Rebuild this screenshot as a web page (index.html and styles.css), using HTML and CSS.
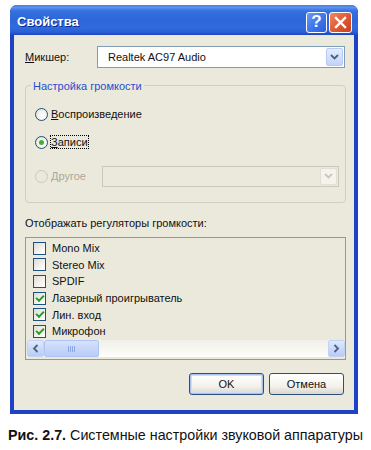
FILE: index.html
```html
<!DOCTYPE html>
<html lang="ru">
<head>
    <meta charset="UTF-8">
    <title>Свойства</title>
    <link rel="stylesheet" href="styles.css">
</head>
<body>
    <div class="window">
        <div class="titlebar">
            <span class="title">Свойства</span>
            <div class="caption-buttons">
                <span class="cap-btn help">?</span>
                <span class="cap-btn close">
                    <svg width="13" height="13" viewBox="0 0 13 13"><path d="M2 2 L11 11 M11 2 L2 11" stroke="#fff" stroke-width="2.4" stroke-linecap="square"/></svg>
                </span>
            </div>
        </div>

        <div class="client">
            <div class="mixer-row">
                <span class="label"><u>М</u>икшер:</span>
                <div class="combo">
                    <span class="combo-text">Realtek AC97 Audio</span>
                    <span class="drop-btn">
                        <svg width="9" height="6" viewBox="0 0 9 6"><path d="M1 1 L4.5 4.5 L8 1" fill="none" stroke="#4d6185" stroke-width="1.8"/></svg>
                    </span>
                </div>
            </div>

            <div class="group">
                <span class="legend">Настройка громкости</span>
                <div class="radio-row">
                    <span class="radio"></span>
                    <span class="label"><u>В</u>оспроизведение</span>
                </div>
                <div class="radio-row second">
                    <span class="radio checked"></span>
                    <span class="label focus"><u>З</u>аписи</span>
                </div>
                <div class="radio-row third disabled">
                    <span class="radio"></span>
                    <span class="label"><u>Д</u>ругое</span>
                    <div class="combo combo-disabled">
                        <span class="drop-btn">
                            <svg width="9" height="6" viewBox="0 0 9 6"><path d="M1 1 L4.5 4.5 L8 1" fill="none" stroke="#c9c7ba" stroke-width="1.8"/></svg>
                        </span>
                    </div>
                </div>
            </div>

            <div class="list-label">Отображать регуляторы громкости:</div>

            <div class="listbox">
                <div class="items">
                    <div class="item"><span class="check"></span>Mono Mix</div>
                    <div class="item"><span class="check"></span>Stereo Mix</div>
                    <div class="item"><span class="check"></span>SPDIF</div>
                    <div class="item"><span class="check checked"></span>Лазерный проигрыватель</div>
                    <div class="item"><span class="check checked"></span>Лин. вход</div>
                    <div class="item"><span class="check checked"></span>Микрофон</div>
                </div>
                <div class="hscroll">
                    <span class="arrow">
                        <svg width="7" height="9" viewBox="0 0 7 9"><path d="M5.5 1 L2 4.5 L5.5 8" fill="none" stroke="#4d6185" stroke-width="1.8"/></svg>
                    </span>
                    <span class="thumb"><span class="grip"></span></span>
                    <span class="track"></span>
                    <span class="arrow">
                        <svg width="7" height="9" viewBox="0 0 7 9"><path d="M1.5 1 L5 4.5 L1.5 8" fill="none" stroke="#4d6185" stroke-width="1.8"/></svg>
                    </span>
                </div>
            </div>

            <div class="buttons">
                <button class="btn default">OK</button>
                <button class="btn">Отмена</button>
            </div>
        </div>
    </div>

    <p class="figure"><b>Рис. 2.7.</b> Системные настройки звуковой аппаратуры</p>
</body>
</html>
```

FILE: styles.css
```css
* {
    margin: 0;
    padding: 0;
    box-sizing: border-box;
}

body {
    background: #fff;
    font-family: 'Liberation Sans', Arial, sans-serif;
    font-size: 11px;
    color: #111;
}

.window {
    margin: 5px 0 0 10px;
    width: 348px;
    height: 409px;
    background: #1d43c4;
    border-radius: 7px 7px 0 0;
    padding: 0 4px 4px 4px;
    display: flex;
    flex-direction: column;
}

.titlebar {
    height: 30px;
    margin: 0 -4px;
    padding: 0 6px 0 7px;
    border-radius: 7px 7px 0 0;
    background: linear-gradient(to bottom, #4a7ae2 0%, #5b92f2 8%, #3570de 20%, #2d66d8 50%, #306bde 75%, #2b60d4 90%, #1d43c4 100%);
    display: flex;
    align-items: center;
    justify-content: space-between;
}

.title {
    color: #fff;
    font-weight: bold;
    font-size: 13px;
    padding-top: 2px;
    text-shadow: 1px 1px 0 #10288a;
}

.caption-buttons {
    display: flex;
    gap: 2px;
    padding-top: 4px;
}

.cap-btn {
    width: 21px;
    height: 21px;
    border: 1px solid #fff;
    border-radius: 3px;
    display: flex;
    align-items: center;
    justify-content: center;
    color: #fff;
    font-weight: bold;
    font-size: 17px;
}

.help {
    background: linear-gradient(135deg, #6b9bf5 0%, #3f77ec 50%, #2a5fd9 100%);
}

.close {
    width: 23px;
    background: linear-gradient(135deg, #f08a64 0%, #e05a35 50%, #c8401e 100%);
}

.client {
    flex: 1;
    background: #ebe9dc;
    padding: 11px 0 0 11px;
}

.mixer-row {
    height: 22px;
    display: flex;
    align-items: center;
}

.mixer-row .label {
    width: 72px;
}

.combo {
    display: flex;
    align-items: center;
    justify-content: space-between;
    width: 248px;
    height: 22px;
    background: #fff;
    border: 1px solid #7f9db9;
    padding: 0 1px 0 10px;
}

.drop-btn {
    width: 17px;
    height: 18px;
    border-radius: 2px;
    background: linear-gradient(to bottom, #e4ecfd, #c2d3fb);
    border: 1px solid #b8cbf6;
    display: flex;
    align-items: center;
    justify-content: center;
}

.group {
    margin-top: 17px;
    width: 321px;
    height: 118px;
    border: 1px solid #d0cfbf;
    border-radius: 4px;
    padding: 17px 0 0 9px;
}

.legend {
    display: block;
    width: max-content;
    margin: -24px 0 11px -4px;
    padding: 0 2px;
    height: 14px;
    line-height: 14px;
    background: #ebe9dc;
    color: #1f4fcf;
}

.radio-row {
    height: 20px;
    margin-top: 3px;
    display: flex;
    align-items: center;
    gap: 3px;
}

.radio-row.second {
    margin-top: 8px;
}

.radio-row.third {
    margin-top: 14px;
}

.radio {
    width: 13px;
    height: 13px;
    border-radius: 50%;
    border: 1px solid #1c5180;
    background: radial-gradient(circle at 60% 60%, #fff 0%, #f2f1ea 50%, #d8d6c8 100%);
    display: flex;
    align-items: center;
    justify-content: center;
}

.radio.checked::after {
    content: "";
    width: 5px;
    height: 5px;
    border-radius: 50%;
    background: #3bb13b;
}

.focus {
    outline: 1px dotted #000;
    outline-offset: 0;
}

.disabled .radio {
    border-color: #cac8bb;
    background: #ebe9dc;
}

.disabled .label {
    color: #aca899;
    width: 48px;
}

.combo-disabled {
    width: 237px;
    height: 21px;
    background: #ebe9dc;
    border-color: #cac8bb;
    justify-content: flex-end;
}

.combo-disabled .drop-btn {
    height: 17px;
    background: #f4f3ee;
    border-color: #e2e0d4;
}

.list-label {
    margin-top: 13px;
    height: 14px;
    line-height: 14px;
}

.listbox {
    margin-top: 7px;
    width: 321px;
    height: 123px;
    border: 1px solid #7f9db9;
    background: #ebe9dc;
    padding: 2px 0 0 0;
    display: flex;
    flex-direction: column;
}

.items {
    flex: 1;
    padding-left: 7px;
}

.item {
    height: 16.6px;
    display: flex;
    align-items: center;
    gap: 6px;
}

.check {
    width: 13px;
    height: 13px;
    border: 1px solid #1c5180;
    background: linear-gradient(135deg, #dcdbd3 0%, #f4f3ee 60%, #fff 100%);
    display: flex;
    align-items: center;
    justify-content: center;
}

.check.checked::after {
    content: "";
    width: 6px;
    height: 3px;
    margin-top: -2px;
    border-left: 2px solid #21a121;
    border-bottom: 2px solid #21a121;
    transform: rotate(-45deg);
}

.hscroll {
    height: 17px;
    margin: 0 0 2px 1px;
    width: 318px;
    display: flex;
    background: #f8f8f3;
}

.arrow {
    width: 17px;
    height: 17px;
    border-radius: 2px;
    background: linear-gradient(to bottom, #dfe9fd, #b9cbf6);
    border: 1px solid #c2d3f8;
    display: flex;
    align-items: center;
    justify-content: center;
}

.thumb {
    width: 55px;
    height: 17px;
    border-radius: 2px;
    background: linear-gradient(to bottom, #d6e2fc, #b8ccf7);
    border: 1px solid #aec4f4;
    display: flex;
    align-items: center;
    justify-content: center;
}

.grip {
    width: 7px;
    height: 6px;
    background: repeating-linear-gradient(to right, #8ea8e6 0 1px, transparent 1px 2px);
}

.track {
    flex: 1;
    background: linear-gradient(to bottom, #f0efe8, #fefefb);
}

.buttons {
    margin: 13px 0 0 164px;
    display: flex;
    gap: 5px;
}

.btn {
    width: 75px;
    height: 22px;
    border: 1px solid #2c4f80;
    border-radius: 3px;
    background: linear-gradient(to bottom, #fff 0%, #f3f2ec 60%, #d9d7cc 100%);
    font-family: 'Liberation Sans', Arial, sans-serif;
    font-size: 11px;
    color: #111;
}

.btn.default {
    box-shadow: inset 0 0 0 1px #aac1ee, inset 0 0 0 2px #cddcf7;
}

.figure {
    margin: 12px 0 0 8px;
    font-size: 14.3px;
    line-height: 18px;
    color: #111;
    white-space: nowrap;
}
```
